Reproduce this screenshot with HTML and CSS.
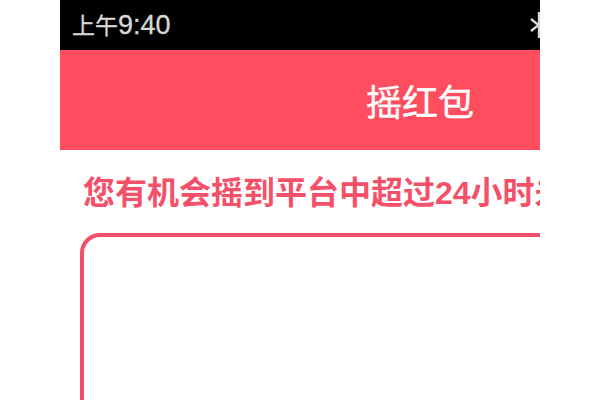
FILE: index.html
```html
<!DOCTYPE html>
<html lang="zh-CN">
<head>
    <meta charset="UTF-8">
    <meta name="viewport" content="width=device-width, initial-scale=1.0">
    <title>摇红包</title>
    <link rel="stylesheet" href="styles.css">
</head>
<body>
    <div class="phone">
        <div class="screen">
            <div class="status-bar">
                <span class="time">上午<span class="digits">9:40</span></span>
                <svg class="bluetooth" width="20" height="26" viewBox="0 0 20 26">
                    <path d="M1 7 L16 19 L9 25 L9 1 L16 7 L1 19" fill="none" stroke="#d8d8d8" stroke-width="2.4"/>
                </svg>
            </div>
            <div class="nav-bar">摇红包</div>
            <p class="notice">您有机会摇到平台中超过24小时未</p>
            <div class="shake-card"></div>
        </div>
    </div>
</body>
</html>
```

FILE: styles.css
```css
body { margin: 0; background: #fff; font-family: "Liberation Sans", "Noto Sans CJK SC", sans-serif; }
.phone { width: 480px; height: 400px; margin-left: 60px; overflow: hidden; }
.screen { width: 720px; }
.status-bar { height: 50px; background: #000; color: #d8d8d8; display: flex; align-items: center; padding-left: 12px; font-size: 23px; }
.time { width: 458px; margin-bottom: 3px; -webkit-text-stroke: 0.3px #d8d8d8; }
.digits { font-size: 27px; }
.bluetooth { flex: none; }
.nav-bar { height: 100px; background: #ff4d60; color: #fff; display: flex; align-items: center; justify-content: center; font-size: 36px; -webkit-text-stroke: 0.4px #fff; }
.notice { margin: 25px 0 0 23px; color: #f5506a; font-size: 32px; line-height: 36px; font-weight: bold; white-space: nowrap; }
.shake-card { margin: 22px 20px 0; height: 400px; border: 4px solid #f0506a; border-radius: 20px; }
```
